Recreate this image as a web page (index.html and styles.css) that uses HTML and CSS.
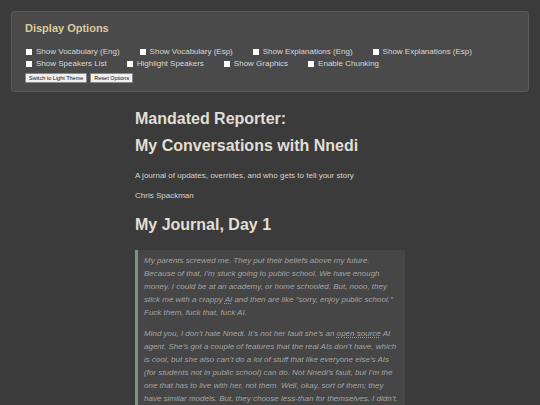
FILE: index.html
```html
<!DOCTYPE html>
<html lang="en">
<head>
<meta charset="utf-8">
<title>Mandated Reporter</title>
<link rel="stylesheet" href="styles.css">
</head>
<body>
<section class="options">
  <h2 class="options-title">Display Options</h2>
  <div class="opt-row">
    <label class="opt"><input type="checkbox"><span>Show Vocabulary (Eng)</span></label>
    <label class="opt"><input type="checkbox"><span>Show Vocabulary (Esp)</span></label>
    <label class="opt"><input type="checkbox"><span>Show Explanations (Eng)</span></label>
    <label class="opt"><input type="checkbox"><span>Show Explanations (Esp)</span></label>
  </div>
  <div class="opt-row">
    <label class="opt"><input type="checkbox"><span>Show Speakers List</span></label>
    <label class="opt"><input type="checkbox"><span>Highlight Speakers</span></label>
    <label class="opt"><input type="checkbox"><span>Show Graphics</span></label>
    <label class="opt"><input type="checkbox"><span>Enable Chunking</span></label>
  </div>
  <div class="btn-row">
    <button class="btn">Switch to Light Theme</button>
    <button class="btn">Reset Options</button>
  </div>
</section>
<main class="content">
  <h1 class="title">Mandated Reporter:<br>My Conversations with Nnedi</h1>
  <p class="meta">A journal of updates, overrides, and who gets to tell your story</p>
  <p class="meta">Chris Spackman</p>
  <h2 class="chapter">My Journal, Day 1</h2>
  <blockquote class="journal">
    <p>My parents screwed me. They put their beliefs above my future. Because of that, I’m stuck going to public school. We have enough money. I could be at an academy, or home schooled. But, nooo, they stick me with a crappy <span class="term">AI</span> and then are like “sorry, enjoy public school.” Fuck them, fuck that, fuck AI.</p>
    <p>Mind you, I don’t hate Nnedi. It’s not her fault she’s an <span class="term">open source</span> AI agent. She’s got a couple of features that the real AIs don’t have, which is cool, but she also can’t do a lot of stuff that like everyone else’s AIs (for students not in public school) can do. Not Nnedi’s fault, but I’m the one that has to live with her, not them. Well, okay, sort of them; they have similar models. But, they choose less-than for themselves. I didn’t. They chose it for me.</p>
  </blockquote>
</main>
</body>
</html>
```

FILE: styles.css
```css
html, body {
  margin: 0;
  padding: 0;
}
body {
  background: #3b3b3b;
  color: #e2ded4;
  font-family: "Liberation Sans", Arial, sans-serif;
  padding: 11px 11px 0 11px;
}
.options {
  background: #4a4a4a;
  border: 1px solid #5a5a5a;
  border-radius: 3px;
  padding: 8px 13px 8px 13px;
}
.options-title {
  margin: 0 0 10px 0;
  font-size: 11px;
  line-height: 16px;
  font-weight: bold;
  color: #dccb9a;
}
.opt-row {
  display: flex;
  flex-wrap: wrap;
  column-gap: 19px;
  font-size: 8px;
  line-height: 12px;
  color: #d8d8d8;
}
.opt {
  display: flex;
  align-items: center;
  gap: 4px;
  margin-left: 1px;
}
.opt input {
  appearance: none;
  -webkit-appearance: none;
  margin: 0;
  width: 6px;
  height: 6px;
  background: #ffffff;
  border: none;
  border-radius: 0;
}
.btn-row {
  display: flex;
  gap: 3px;
  margin-top: 3px;
}
.btn {
  font-family: "Liberation Sans", Arial, sans-serif;
  font-size: 5.5px;
  line-height: 6px;
  padding: 1px 3px;
  background: #f0f0f0;
  color: #111;
  border: 1px solid #8a8a8a;
  border-radius: 1px;
  margin: 0;
}
.content {
  width: 270px;
  margin: 0 auto;
  padding-top: 13px;
}
.title {
  margin: 0;
  font-size: 16px;
  line-height: 27px;
  font-weight: bold;
  color: #e2ded4;
}
.meta {
  margin: 11px 0 8px 0;
  font-size: 8px;
  line-height: 12px;
  color: #d8d4cc;
}
.meta + .meta {
  margin-top: 8px;
}
.chapter {
  margin: 12px 0 14px 0;
  font-size: 16px;
  line-height: 22px;
  font-weight: bold;
  color: #e2ded4;
}
.journal {
  margin: 0;
  background: #464646;
  border-left: 3px solid #76977a;
  padding: 4px 7px 4px 6px;
  font-style: italic;
  font-size: 8px;
  line-height: 13px;
  color: #a4a4a4;
}
.journal p {
  margin: 0 0 8px 0;
}
.term {
  text-decoration: underline dotted;
  text-underline-offset: 1px;
}
```
